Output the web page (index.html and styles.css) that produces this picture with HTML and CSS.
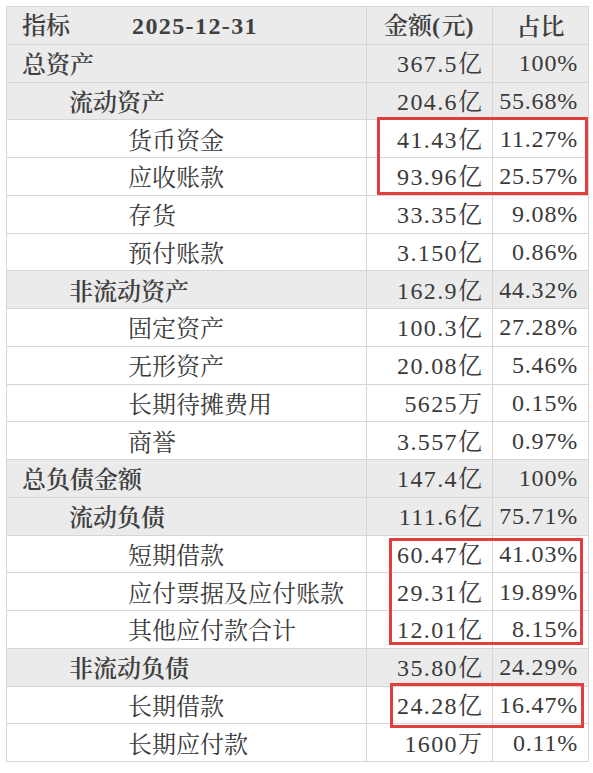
FILE: index.html
```html
<!DOCTYPE html>
<html lang="zh-CN">
<head>
<meta charset="utf-8">
<title>资产负债</title>
<link rel="stylesheet" href="styles.css">
</head>
<body>
<div class="wrap">
  <table class="sheet">
    <colgroup><col class="c1"><col class="c2"><col class="c3"></colgroup>
    <thead>
      <tr class="grey head">
        <th class="name"><span>指标</span><span class="date num">2025-12-31</span></th>
        <th class="ctr">金额<span class="num">(</span>元<span class="num">)</span></th>
        <th class="ctr">占比</th>
      </tr>
    </thead>
    <tbody>
      <tr class="grey"><td class="l0 b">总资产</td><td class="v"><span class="num">367.5</span>亿</td><td class="v num pct">100%</td></tr>
      <tr class="grey"><td class="l1 b">流动资产</td><td class="v"><span class="num">204.6</span>亿</td><td class="v num pct">55.68%</td></tr>
      <tr><td class="l2">货币资金</td><td class="v"><span class="num">41.43</span>亿</td><td class="v num pct">11.27%</td></tr>
      <tr><td class="l2">应收账款</td><td class="v"><span class="num">93.96</span>亿</td><td class="v num pct">25.57%</td></tr>
      <tr><td class="l2">存货</td><td class="v"><span class="num">33.35</span>亿</td><td class="v num pct">9.08%</td></tr>
      <tr><td class="l2">预付账款</td><td class="v"><span class="num">3.150</span>亿</td><td class="v num pct">0.86%</td></tr>
      <tr class="grey"><td class="l1 b">非流动资产</td><td class="v"><span class="num">162.9</span>亿</td><td class="v num pct">44.32%</td></tr>
      <tr><td class="l2">固定资产</td><td class="v"><span class="num">100.3</span>亿</td><td class="v num pct">27.28%</td></tr>
      <tr><td class="l2">无形资产</td><td class="v"><span class="num">20.08</span>亿</td><td class="v num pct">5.46%</td></tr>
      <tr><td class="l2">长期待摊费用</td><td class="v"><span class="num">5625</span>万</td><td class="v num pct">0.15%</td></tr>
      <tr><td class="l2">商誉</td><td class="v"><span class="num">3.557</span>亿</td><td class="v num pct">0.97%</td></tr>
      <tr class="grey"><td class="l0 b">总负债金额</td><td class="v"><span class="num">147.4</span>亿</td><td class="v num pct">100%</td></tr>
      <tr class="grey"><td class="l1 b">流动负债</td><td class="v"><span class="num">111.6</span>亿</td><td class="v num pct">75.71%</td></tr>
      <tr><td class="l2">短期借款</td><td class="v"><span class="num">60.47</span>亿</td><td class="v num pct">41.03%</td></tr>
      <tr><td class="l2">应付票据及应付账款</td><td class="v"><span class="num">29.31</span>亿</td><td class="v num pct">19.89%</td></tr>
      <tr><td class="l2">其他应付款合计</td><td class="v"><span class="num">12.01</span>亿</td><td class="v num pct">8.15%</td></tr>
      <tr class="grey"><td class="l1 b">非流动负债</td><td class="v"><span class="num">35.80</span>亿</td><td class="v num pct">24.29%</td></tr>
      <tr><td class="l2">长期借款</td><td class="v"><span class="num">24.28</span>亿</td><td class="v num pct">16.47%</td></tr>
      <tr><td class="l2">长期应付款</td><td class="v"><span class="num">1600</span>万</td><td class="v num pct">0.11%</td></tr>
    </tbody>
  </table>
  <div class="mark m1"></div>
  <div class="mark m2"></div>
  <div class="mark m3"></div>
</div>
</body>
</html>
```
FILE: styles.css
```css
html, body {
  margin: 0;
  padding: 0;
  background: #ffffff;
}
body {
  font-family: "Noto Serif CJK SC", "Noto Sans CJK SC", sans-serif;
  color: #3a3a3a;
}
.wrap {
  position: relative;
  margin: 6px 0 0 6px;
  width: 582px;
}
.sheet {
  border-collapse: collapse;
  table-layout: fixed;
  width: 582px;
  font-size: 24px;
}
.c1 { width: 360px; }
.c2 { width: 126px; }
.c3 { width: 96px; }
.sheet tr {
  height: 37.75px;
}
.sheet th,
.sheet td {
  border: 1px solid #d6d6d6;
  padding: 0 10px 0 0;
  line-height: 30px;
  white-space: nowrap;
  overflow: visible;
  font-weight: 400;
}
.grey th,
.grey td {
  background: #ebebeb;
}
.head th {
  font-weight: 600;
  color: #404040;
}
.name {
  text-align: left;
  padding-left: 15px !important;
}
.date {
  margin-left: 62px;
}
.ctr {
  text-align: center;
  padding: 0 !important;
}
.l0 { padding-left: 15px !important; }
.l1 { padding-left: 62px !important; }
.l2 { padding-left: 121px !important; }
.b {
  font-weight: 600 !important;
  color: #404040;
}
.v {
  text-align: right;
}
.num {
  font-family: "Liberation Serif", "Noto Serif CJK SC", serif;
  letter-spacing: 1.4px;
}
.pct {
  letter-spacing: 0.8px;
}
.mark {
  position: absolute;
  border: 3px solid #e23e3e;
  box-sizing: border-box;
}
.m1 { left: 371px; top: 111px; width: 211px; height: 78px; }
.m2 { left: 383px; top: 532px; width: 194px; height: 107px; }
.m3 { left: 384px; top: 677px; width: 194px; height: 45px; }
```
